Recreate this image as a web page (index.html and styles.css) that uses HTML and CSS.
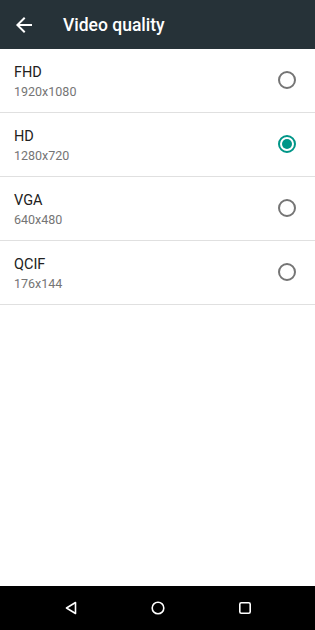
FILE: index.html
```html
<!DOCTYPE html>
<html>
<head>
<meta charset="utf-8">
<link rel="stylesheet" href="styles.css">
</head>
<body>
<div class="screen">
  <header class="toolbar">
    <svg class="back" width="24" height="24" viewBox="0 0 24 24"><path d="M20 11H7.83l5.59-5.59L12 4l-8 8 8 8 1.41-1.41L7.83 13H20v-2z" fill="#fff"/></svg>
    <h1 class="title">Video quality</h1>
  </header>
  <main class="list">
    <div class="row">
      <div class="text"><div class="name">FHD</div><div class="sub">1920x1080</div></div>
      <span class="radio"></span>
    </div>
    <div class="row">
      <div class="text"><div class="name">HD</div><div class="sub">1280x720</div></div>
      <span class="radio checked"></span>
    </div>
    <div class="row">
      <div class="text"><div class="name">VGA</div><div class="sub">640x480</div></div>
      <span class="radio"></span>
    </div>
    <div class="row">
      <div class="text"><div class="name">QCIF</div><div class="sub">176x144</div></div>
      <span class="radio"></span>
    </div>
  </main>
  <nav class="navbar">
    <svg width="16" height="16" viewBox="0 0 16 16"><path d="M12.5 2.5 L3.5 8 L12.5 13.5 Z" fill="none" stroke="#fff" stroke-width="1.6" stroke-linejoin="round"/></svg>
    <svg width="16" height="16" viewBox="0 0 16 16"><circle cx="8" cy="8" r="5.8" fill="none" stroke="#fff" stroke-width="1.6"/></svg>
    <svg width="16" height="16" viewBox="0 0 16 16"><rect x="2.8" y="2.8" width="10.4" height="10.4" rx="1.5" fill="none" stroke="#fff" stroke-width="1.6"/></svg>
  </nav>
</div>
</body>
</html>
```
FILE: styles.css
```css
* { box-sizing: border-box; }
html, body { margin: 0; padding: 0; }
body { font-family: Roboto, "Noto Sans", sans-serif; background: #fff; }
.screen { width: 315px; height: 630px; display: flex; flex-direction: column; }
.toolbar { height: 49px; background: #263238; display: flex; align-items: center; padding-left: 12px; flex-shrink: 0; }
.back { width: 24px; height: 24px; }
.title { margin: 0 0 0 27px; color: #fff; font-size: 17.5px; font-weight: 500; letter-spacing: 0; }
.list { flex: 1; }
.row { height: 64px; display: flex; align-items: center; justify-content: space-between; padding: 0 19px 0 14px; border-bottom: 1px solid #e0e0e0; }
.text { padding-top: 3px; }
.name { font-size: 14.5px; color: #212121; line-height: 18px; }
.sub { font-size: 12.5px; color: #757575; line-height: 18px; margin-top: 1px; }
.radio { width: 18px; height: 18px; border: 2px solid #757575; border-radius: 50%; display: block; margin-bottom: 1px; position: relative; }
.radio.checked { border-color: #009688; }
.radio.checked::after { content: ""; position: absolute; left: 2px; top: 2px; width: 10px; height: 10px; border-radius: 50%; background: #009688; }
.navbar { height: 44px; background: #000; display: flex; align-items: center; justify-content: center; gap: 71px; flex-shrink: 0; }
```
